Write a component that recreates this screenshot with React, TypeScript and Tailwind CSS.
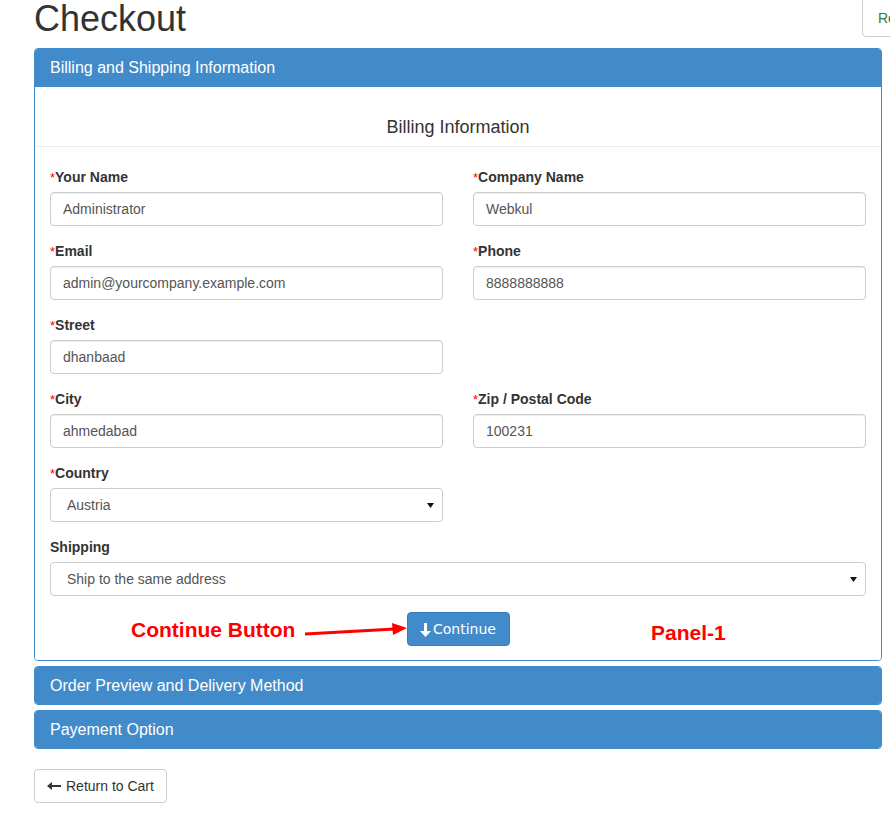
import React from 'react';

const font = { fontFamily: '"Liberation Sans", Arial, sans-serif' };

function Label({ text, required = true }: { text: string; required?: boolean }) {
  return (
    <div className="h-5 mb-[5px] text-[14px] leading-5 font-bold text-[#333]">
      {required && <span className="text-[#ff0000] font-normal text-[13px]">*</span>}
      {text}
    </div>
  );
}

function Input({ value }: { value: string }) {
  return (
    <div className="h-[34px] border border-[#ccc] rounded-[4px] px-3 flex items-center text-[14px] text-[#555] shadow-[inset_0_1px_1px_rgba(0,0,0,0.075)]">
      {value}
    </div>
  );
}

function Select({ value }: { value: string }) {
  return (
    <div className="h-[34px] border border-[#ccc] rounded-[4px] pl-4 pr-[8px] flex items-center justify-between text-[14px] text-[#555]">
      <span>{value}</span>
      <svg width="7" height="5" viewBox="0 0 7 5">
        <path d="M0 0h7L3.5 5z" fill="#111" />
      </svg>
    </div>
  );
}

function Field({ label, value, required }: { label: string; value: string; required?: boolean }) {
  return (
    <div className="mb-[15px]">
      <Label text={label} required={required} />
      <Input value={value} />
    </div>
  );
}

function PanelHeading({ title, tall = true }: { title: string; tall?: boolean }) {
  return (
    <div
      className={
        'bg-[#428bca] text-white text-[16px] flex items-center px-[15px] ' +
        (tall ? 'h-[38px]' : 'h-[37px]')
      }
    >
      {title}
    </div>
  );
}

function CollapsedPanel({ title }: { title: string }) {
  return (
    <div className="mt-[5px] border border-[#428bca] rounded-[4px] overflow-hidden">
      <PanelHeading title={title} tall={false} />
    </div>
  );
}

function BillingPanel() {
  return (
    <div className="border border-[#428bca] rounded-[4px] overflow-hidden">
      <PanelHeading title="Billing and Shipping Information" />
      <div className="bg-white">
        <div className="pt-[30px] pb-[9px] text-center text-[18px] leading-5 text-[#333] border-b border-[#eee]">
          Billing Information
        </div>
        <div className="pt-5 px-[15px]">
          <div className="grid grid-cols-2 gap-x-[30px]">
            <Field label="Your Name" value="Administrator" />
            <Field label="Company Name" value="Webkul" />
            <Field label="Email" value="admin@yourcompany.example.com" />
            <Field label="Phone" value="8888888888" />
            <Field label="Street" value="dhanbaad" />
            <div />
            <Field label="City" value="ahmedabad" />
            <Field label="Zip / Postal Code" value="100231" />
            <div className="mb-[15px]">
              <Label text="Country" />
              <Select value="Austria" />
            </div>
            <div />
          </div>
          <div className="mb-4">
            <Label text="Shipping" required={false} />
            <Select value="Ship to the same address" />
          </div>
          <div className="relative flex justify-center pb-[14px]">
            <button
              className="h-[34px] w-[103px] bg-[#428bca] border border-[#357ebd] rounded-[4px] text-white text-[14px] flex items-center justify-center gap-[2px] pt-[1px]"
              style={{ fontFamily: '"DejaVu Sans", Verdana, sans-serif' }}
            >
              <svg width="11" height="14" viewBox="0 0 11 14">
                <path d="M4 0h3v8h4l-5.5 6L0 8h4z" fill="white" />
              </svg>
              Continue
            </button>
            <div className="absolute left-[81px] top-[6px] text-[21px] font-bold text-[#ff0000] leading-6">
              Continue Button
            </div>
            <svg className="absolute left-[253px] top-[8px]" width="120" height="18" viewBox="0 0 120 18">
              <path d="M2 14 L92 9" stroke="#ff0000" strokeWidth="3" />
              <path d="M89 3 L104 8 L90 15 z" fill="#ff0000" />
            </svg>
            <div className="absolute left-[601px] top-[9px] text-[21px] font-bold text-[#ff0000] leading-6">
              Panel-1
            </div>
          </div>
        </div>
      </div>
    </div>
  );
}

export default function App() {
  return (
    <div className="w-[890px] h-[816px] overflow-hidden bg-white text-[#333]" style={font}>
      <div className="pl-[34px] pr-[8px]">
        <div className="flex items-start h-[48px]">
          <h1 className="text-[36px] leading-[38px] text-[#333]">Checkout</h1>
          <button className="ml-auto -mr-[80px] -mt-[4px] h-[41px] w-[100px] border border-[#ccc] rounded-[4px] bg-white text-[#3c763d] text-[14px] text-left pl-[15px] pt-[4px]">
            Return
          </button>
        </div>
        <BillingPanel />
        <CollapsedPanel title="Order Preview and Delivery Method" />
        <CollapsedPanel title="Payement Option" />
        <button className="mt-[20px] h-[34px] px-3 border border-[#ccc] rounded-[4px] bg-white text-[14px] text-[#333] flex items-center gap-[5px]">
          <svg width="14" height="10" viewBox="0 0 14 10">
            <path d="M0 5 L5 1 V4 H14 V6 H5 V9 Z" fill="#333" />
          </svg>
          Return to Cart
        </button>
      </div>
    </div>
  );
}
